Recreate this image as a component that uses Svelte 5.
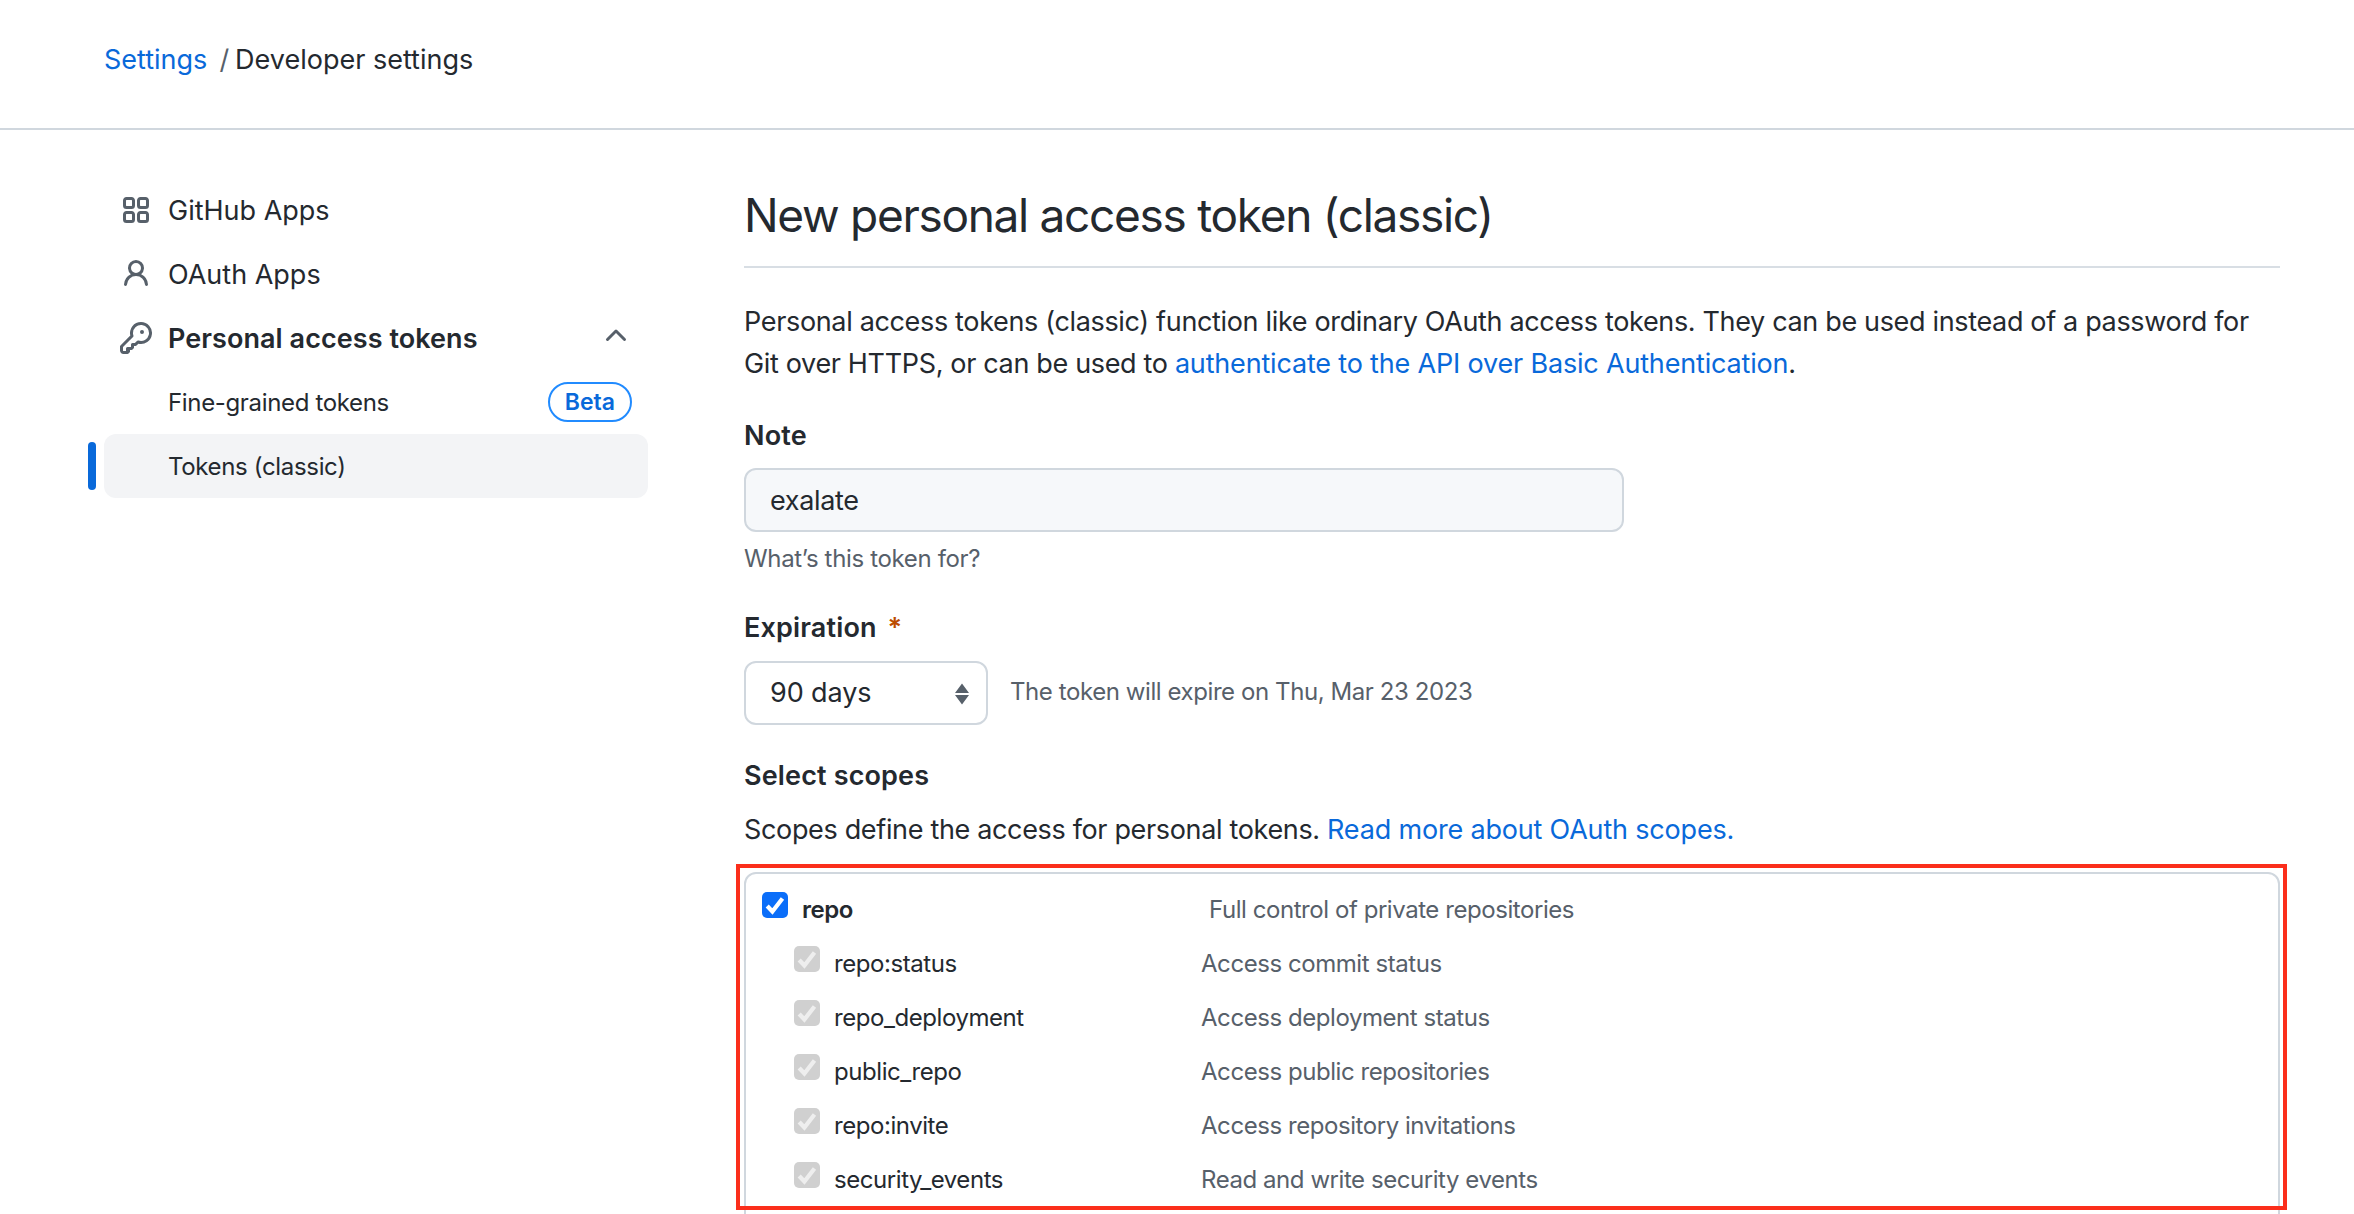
<script>
  const subScopes = [
    { name: 'repo:status', desc: 'Access commit status' },
    { name: 'repo_deployment', desc: 'Access deployment status' },
    { name: 'public_repo', desc: 'Access public repositories' },
    { name: 'repo:invite', desc: 'Access repository invitations' },
    { name: 'security_events', desc: 'Read and write security events' },
  ];
</script>

<div class="page">
  <header class="crumbs">
    <a href="#settings">Settings</a>
    <span class="slash">/</span>
    <span>Developer settings</span>
  </header>

  <div class="layout">
    <nav class="side">
      <div class="nav-item">
        <svg class="nav-icon" viewBox="0 0 16 16" aria-hidden="true">
          <path fill-rule="evenodd" d="M1.5 3.25c0-.966.784-1.75 1.75-1.75h2.5c.966 0 1.75.784 1.75 1.75v2.5A1.75 1.75 0 0 1 5.75 7.5h-2.5A1.75 1.75 0 0 1 1.5 5.75v-2.5zM3.25 3a.25.25 0 0 0-.25.25v2.5c0 .138.112.25.25.25h2.5A.25.25 0 0 0 6 5.75v-2.5A.25.25 0 0 0 5.75 3h-2.5zM8.5 3.25c0-.966.784-1.75 1.75-1.75h2.5c.966 0 1.75.784 1.75 1.75v2.5a1.75 1.75 0 0 1-1.75 1.75h-2.5A1.75 1.75 0 0 1 8.5 5.75v-2.5zM10.25 3a.25.25 0 0 0-.25.25v2.5c0 .138.112.25.25.25h2.5a.25.25 0 0 0 .25-.25v-2.5a.25.25 0 0 0-.25-.25h-2.5zM1.5 10.25c0-.966.784-1.75 1.75-1.75h2.5c.966 0 1.75.784 1.75 1.75v2.5a1.75 1.75 0 0 1-1.75 1.75h-2.5a1.75 1.75 0 0 1-1.75-1.75v-2.5zM3.25 10a.25.25 0 0 0-.25.25v2.5c0 .138.112.25.25.25h2.5a.25.25 0 0 0 .25-.25v-2.5a.25.25 0 0 0-.25-.25h-2.5zM8.5 10.25c0-.966.784-1.75 1.75-1.75h2.5c.966 0 1.75.784 1.75 1.75v2.5a1.75 1.75 0 0 1-1.75 1.75h-2.5a1.75 1.75 0 0 1-1.75-1.75v-2.5zM10.25 10a.25.25 0 0 0-.25.25v2.5c0 .138.112.25.25.25h2.5a.25.25 0 0 0 .25-.25v-2.5a.25.25 0 0 0-.25-.25h-2.5z" />
        </svg>
        <span>GitHub Apps</span>
      </div>
      <div class="nav-item">
        <svg class="nav-icon" viewBox="0 0 16 16" aria-hidden="true">
          <path fill-rule="evenodd" d="M10.5 5a2.5 2.5 0 1 1-5 0 2.5 2.5 0 0 1 5 0zm.061 3.073a4 4 0 1 0-5.123 0 6.004 6.004 0 0 0-3.431 5.142.75.75 0 0 0 1.498.07 4.5 4.5 0 0 1 8.99 0 .75.75 0 1 0 1.498-.07 6.005 6.005 0 0 0-3.432-5.142z" />
        </svg>
        <span>OAuth Apps</span>
      </div>
      <div class="nav-item strong">
        <svg class="nav-icon" viewBox="0 0 16 16" aria-hidden="true">
          <path fill-rule="evenodd" d="M6.5 5.5a4 4 0 1 1 2.731 3.795.75.75 0 0 0-.768.18L7.44 10.5H6.25a.75.75 0 0 0-.75.75v1.19l-.06.06H3.75a.75.75 0 0 0-.75.75v1.19l-.06.06H1.75a.25.25 0 0 1-.25-.25v-1.69l5.024-5.023a.75.75 0 0 0 .181-.768A3.995 3.995 0 0 1 6.5 5.5zm4-5.5a5.5 5.5 0 0 0-5.348 6.788L.22 11.72a.75.75 0 0 0-.22.53v2C0 15.216.784 16 1.75 16h2a.75.75 0 0 0 .53-.22l.5-.5a.75.75 0 0 0 .22-.53V14h.75a.75.75 0 0 0 .53-.22l.5-.5a.75.75 0 0 0 .22-.53V12h.75a.75.75 0 0 0 .53-.22l.932-.932A5.5 5.5 0 1 0 10.5 0zm.5 6a1 1 0 1 0 0-2 1 1 0 0 0 0 2z" />
        </svg>
        <span>Personal access tokens</span>
        <svg class="chevron" viewBox="0 0 16 16" aria-hidden="true">
          <path fill-rule="evenodd" d="M3.22 9.78a.75.75 0 0 1 0-1.06l4.25-4.25a.75.75 0 0 1 1.06 0l4.25 4.25a.75.75 0 0 1-1.06 1.06L8 6.06 4.28 9.78a.75.75 0 0 1-1.06 0z" />
        </svg>
      </div>
      <div class="nav-item sub">
        <span>Fine-grained tokens</span>
        <span class="beta">Beta</span>
      </div>
      <div class="nav-item sub current">
        <span>Tokens (classic)</span>
      </div>
    </nav>

    <main class="content">
      <h1>New personal access token (classic)</h1>
      <p class="intro">
        Personal access tokens (classic) function like ordinary OAuth access tokens. They can be used instead of a password for Git over HTTPS, or can be used to <a href="#auth">authenticate to the API over Basic Authentication</a>.
      </p>

      <div class="label">Note</div>
      <input class="note" type="text" value="exalate" />
      <div class="hint">What’s this token for?</div>

      <div class="label expiration">Expiration <span class="req">*</span></div>
      <div class="expiry-row">
        <div class="select">
          <span>90 days</span>
          <svg class="updown" viewBox="0 0 16 22" aria-hidden="true">
            <path d="M8 .5l7 9.5H1zM8 21.5L1 12h14z" />
          </svg>
        </div>
        <span class="expiry-note">The token will expire on Thu, Mar 23 2023</span>
      </div>

      <div class="label scopes-label">Select scopes</div>
      <p class="scopes-intro">Scopes define the access for personal tokens. <a href="#scopes">Read more about OAuth scopes.</a></p>

      <div class="scopes-wrap">
        <div class="scopes">
          <div class="scope parent">
            <span class="check on">
              <svg viewBox="0 0 16 16" aria-hidden="true"><path d="M3.2 8.6l3.2 3.4 6.2-8" /></svg>
            </span>
            <span class="scope-name">repo</span>
            <span class="scope-desc">Full control of private repositories</span>
          </div>
          {#each subScopes as s}
            <div class="scope child">
              <span class="check">
                <svg viewBox="0 0 16 16" aria-hidden="true"><path d="M3.2 8.6l3.2 3.4 6.2-8" /></svg>
              </span>
              <span class="scope-name">{s.name}</span>
              <span class="scope-desc">{s.desc}</span>
            </div>
          {/each}
        </div>
        <div class="callout"></div>
      </div>
    </main>
  </div>
</div>

<style>
  :global(body) {
    margin: 0;
    background: #fff;
  }
  .page {
    height: 1214px;
    overflow: hidden;
    font-family: Inter, "Liberation Sans", sans-serif;
    font-size: 27px;
    letter-spacing: -0.34px;
    line-height: 42px;
    color: #24292f;
  }
  a {
    color: #0969da;
    text-decoration: none;
  }
  .crumbs {
    display: flex;
    gap: 12px;
    height: 130px;
    box-sizing: border-box;
    padding: 39px 0 0 104px;
    border-bottom: 2px solid #d0d7de;
    letter-spacing: 0;
  }
  .slash {
    color: #57606a;
    margin-right: -6px;
  }
  .layout {
    display: flex;
    padding-top: 48px;
  }
  .side {
    width: 544px;
    margin-left: 104px;
    flex: none;
  }
  .nav-item {
    position: relative;
    display: flex;
    align-items: center;
    height: 64px;
    padding-left: 64px;
    border-radius: 12px;
    letter-spacing: 0;
  }
  .nav-item > span:first-of-type {
    position: relative;
    top: 1px;
  }
  .nav-icon {
    position: absolute;
    left: 16px;
    width: 32px;
    height: 32px;
    fill: #57606a;
  }
  .strong {
    font-weight: 600;
    letter-spacing: 0.06px;
  }
  .chevron {
    position: absolute;
    right: 16px;
    top: 15px;
    width: 32px;
    height: 32px;
    fill: #57606a;
  }
  .sub {
    font-size: 24px;
    letter-spacing: -0.34px;
    justify-content: space-between;
    padding-right: 16px;
  }
  .beta {
    box-sizing: border-box;
    height: 40px;
    padding: 0 15px;
    border: 2px solid #218bff;
    border-radius: 20px;
    font-size: 23px;
    font-weight: 600;
    letter-spacing: 0;
    line-height: 36px;
    color: #0969da;
  }
  .current {
    background: #f3f4f6;
  }
  .current::before {
    content: "";
    position: absolute;
    left: -16px;
    top: 8px;
    width: 8px;
    height: 48px;
    border-radius: 4px;
    background: #0969da;
  }
  .content {
    margin-left: 96px;
    width: 1536px;
    flex: none;
  }
  h1 {
    margin: -2px 0 0;
    height: 90px;
    font-size: 46px;
    font-weight: 400;
    letter-spacing: -1.3px;
    line-height: 78px;
    border-bottom: 2px solid #d8dee4;
  }
  .intro {
    margin: 33px 0 0;
  }
  .intro a,
  .scopes-intro a {
    letter-spacing: -0.18px;
  }
  .label {
    font-weight: 600;
    letter-spacing: 0.15px;
  }
  .intro + .label {
    margin-top: 30px;
  }
  .note {
    display: block;
    box-sizing: border-box;
    width: 880px;
    height: 64px;
    margin-top: 11px;
    padding: 0 24px;
    border: 2px solid #d0d7de;
    border-radius: 12px;
    background: #f6f8fa;
    font: inherit;
    letter-spacing: -0.34px;
    color: inherit;
    outline: none;
  }
  .hint {
    margin-top: 6px;
    font-size: 24px;
    color: #57606a;
  }
  .expiration {
    margin-top: 27px;
  }
  .req {
    color: #bc4c00;
    margin-left: 4px;
  }
  .expiry-row {
    display: flex;
    align-items: center;
    gap: 22px;
    margin-top: 12px;
  }
  .select {
    position: relative;
    box-sizing: border-box;
    width: 244px;
    height: 64px;
    padding: 0 24px;
    border: 2px solid #d0d7de;
    border-radius: 12px;
    letter-spacing: -0.1px;
    line-height: 60px;
  }
  .updown {
    position: absolute;
    right: 16px;
    top: 20px;
    width: 16px;
    height: 22px;
    fill: #57606a;
  }
  .expiry-note {
    position: relative;
    top: -1px;
    font-size: 24px;
    letter-spacing: -0.42px;
    color: #57606a;
  }
  .scopes-label {
    margin-top: 30px;
  }
  .scopes-intro {
    margin: 12px 0 0;
  }
  .scopes-wrap {
    position: relative;
    margin-top: 21px;
  }
  .scopes {
    border: 2px solid #d0d7de;
    border-radius: 12px;
    padding: 9px 0 0 16px;
    height: 500px;
    box-sizing: border-box;
  }
  .scope {
    position: relative;
    display: flex;
    align-items: center;
    height: 54px;
    font-size: 24px;
    letter-spacing: -0.44px;
  }
  .child {
    padding-left: 32px;
  }
  .parent .scope-name {
    font-weight: 600;
  }
  .check {
    flex: none;
    width: 26px;
    height: 26px;
    margin: -11px 14px 0 0;
    border-radius: 5px;
    background: #d0d0d0;
  }
  .check.on {
    background: #0b6ef9;
  }
  .check svg {
    display: block;
    width: 26px;
    height: 26px;
    fill: none;
    stroke: #eeeeee;
    stroke-width: 2.6;
  }
  .check.on svg {
    stroke: #fff;
  }
  .child .scope-name {
    width: 367px;
    flex: none;
  }
  .parent .scope-name {
    width: 407px;
    flex: none;
  }
  .scope-desc {
    color: #57606a;
  }
  /* red annotation box from the screenshot */
  .callout {
    position: absolute;
    left: -8px;
    right: -7px;
    top: -8px;
    height: 346px;
    box-sizing: border-box;
    border: 4px solid #fb2e1b;
    pointer-events: none;
  }
</style>
